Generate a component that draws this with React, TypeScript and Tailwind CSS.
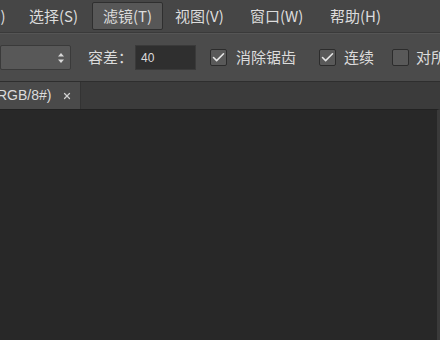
import { Check, X } from "lucide-react";

function Box({ checked }: { checked: boolean }) {
  return (
    <div className="w-[17px] h-[17px] rounded-[2px] border border-[#2c2c2c] bg-[#595959] flex items-center justify-center flex-shrink-0">
      {checked && <Check className="w-[15px] h-[15px] text-[#e6e6e6]" strokeWidth={2.5} />}
    </div>
  );
}

export default function App() {
  return (
    <div className="w-[440px] h-[340px] overflow-hidden bg-[#282828] flex flex-col font-['Noto_Sans_CJK_SC','Liberation_Sans',sans-serif] text-[15px] text-[#dcdcdc] whitespace-nowrap">
      <div className="h-[33px] bg-[#464646] flex items-center border-b border-[#3a3a3a] flex-shrink-0">
        <div className="w-[29px] flex-shrink-0 overflow-hidden">
          <span className="ml-[-15px]">(D)</span>
        </div>
        <span className="w-[63px] flex-shrink-0">选择(S)</span>
        <span className="w-[71px] h-[28px] flex-shrink-0 flex items-center justify-center border border-[#2f2f2f] bg-[#575757] rounded-[2px]">
          滤镜(T)
        </span>
        <span className="ml-[12px] w-[75px] flex-shrink-0">视图(V)</span>
        <span className="w-[80px] flex-shrink-0">窗口(W)</span>
        <span className="flex-shrink-0">帮助(H)</span>
      </div>
      <div className="h-[48px] bg-[#4b4b4b] border-t border-[#555] flex items-center flex-shrink-0">
        <div className="w-[71px] h-[25px] flex-shrink-0 bg-[#585858] border border-[#3a3a3a] rounded-[2px] flex items-center justify-end pr-[5px]">
          <svg width="8" height="12" viewBox="0 0 8 12" fill="#d8d8d8">
            <path d="M4 1 L7 4.5 H1 Z" />
            <path d="M4 11 L7 7.5 H1 Z" />
          </svg>
        </div>
        <span className="ml-[17px] w-[47px] flex-shrink-0">容差：</span>
        <div className="w-[61px] h-[25px] flex-shrink-0 bg-[#2f2f2f] border border-[#3a3a3a] flex items-center pl-[5px] font-['Liberation_Sans',sans-serif] text-[12px]">
          40
        </div>
        <div className="ml-[14px] flex items-center gap-[9px] flex-shrink-0">
          <Box checked />
          <span className="w-[60px]">消除锯齿</span>
        </div>
        <div className="ml-[23px] flex items-center gap-[8px] flex-shrink-0">
          <Box checked />
          <span className="w-[30px]">连续</span>
        </div>
        <div className="ml-[18px] flex items-center gap-[7px] flex-shrink-0">
          <Box checked={false} />
          <span>对所有图层</span>
        </div>
      </div>
      <div className="h-[28px] bg-[#3b3b3b] border-t border-[#2e2e2e] flex flex-shrink-0">
        <div className="w-[81px] flex-shrink-0 overflow-hidden bg-[#4a4a4a] border-r border-[#333] flex items-center text-[14px] font-['Liberation_Sans',sans-serif]">
          <span className="ml-[-3px]">RGB/8#)</span>
          <X className="ml-[11px] w-[10px] h-[10px] text-[#d0d0d0]" strokeWidth={3} />
        </div>
      </div>
      <div className="flex-1 bg-[#282828] border-t border-[#222] border-r-[3px] border-r-[#3a3a3a]" />
    </div>
  );
}
